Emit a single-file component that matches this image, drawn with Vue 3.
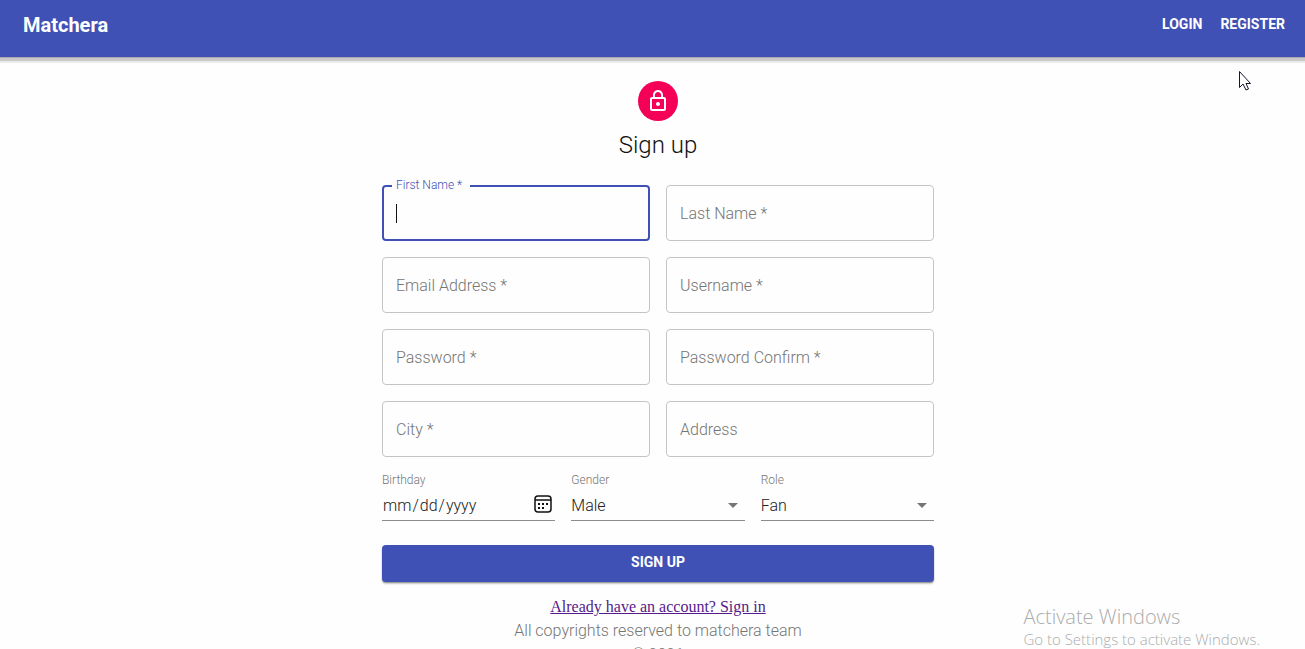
<script setup>
import { reactive } from 'vue'

const fields = [
  { id: 'firstName', label: 'First Name *', type: 'text', active: true },
  { id: 'lastName', label: 'Last Name *', type: 'text' },
  { id: 'email', label: 'Email Address *', type: 'email' },
  { id: 'username', label: 'Username *', type: 'text' },
  { id: 'password', label: 'Password *', type: 'password' },
  { id: 'passwordConfirm', label: 'Password Confirm *', type: 'password' },
  { id: 'city', label: 'City *', type: 'text' },
  { id: 'address', label: 'Address', type: 'text' }
]

const selects = [
  { id: 'gender', label: 'Gender', options: ['Male', 'Female'] },
  { id: 'role', label: 'Role', options: ['Fan', 'Manager'] }
]

const form = reactive({
  firstName: '',
  lastName: '',
  email: '',
  username: '',
  password: '',
  passwordConfirm: '',
  city: '',
  address: '',
  birthday: '',
  gender: 'Male',
  role: 'Fan'
})
</script>

<template>
  <div class="page">
    <header class="bar">
      <h1 class="brand">Matchera</h1>
      <nav class="nav">
        <a href="#login">LOGIN</a>
        <a href="#register">REGISTER</a>
      </nav>
    </header>

    <main class="main">
      <div class="container">
        <div class="avatar">
          <svg viewBox="0 0 24 24" width="24" height="24" fill="#fff" aria-hidden="true">
            <path d="M12 17c1.1 0 2-.9 2-2s-.9-2-2-2-2 .9-2 2 .9 2 2 2zm6-9h-1V6c0-2.760-2.240-5-5-5S7 3.240 7 6v2H6c-1.100 0-2 .9-2 2v10c0 1.100.9 2 2 2h12c1.100 0 2-.9 2-2V10c0-1.100-.9-2-2-2zM8.900 6c0-1.710 1.390-3.100 3.100-3.100s3.100 1.390 3.100 3.100v2H8.900V6zM18 20H6V10h12v10z" />
          </svg>
        </div>
        <h2 class="title">Sign up</h2>

        <form class="form" @submit.prevent>
          <div class="grid">
            <div v-for="f in fields" :key="f.id" class="field" :class="{ active: f.active }">
              <input :id="f.id" v-model="form[f.id]" :type="f.type" />
              <label :for="f.id">{{ f.label }}</label>
              <span v-if="f.active" class="caret"></span>
            </div>
          </div>

          <div class="row">
            <div class="line-field">
              <label for="birthday">Birthday</label>
              <input id="birthday" v-model="form.birthday" type="date" />
              <svg class="calendar" viewBox="0 0 18 18" width="18" height="18" aria-hidden="true">
                <rect x="1" y="1" width="16" height="16" rx="3" fill="none" stroke="#111" stroke-width="1.500" />
                <path d="M1 5h16" stroke="#111" stroke-width="1.500" />
                <path d="M8 8h2v2H8zM12 8h2v2h-2zM4 8h2v2H4zM4 12h2v2H4zM8 12h2v2H8z" fill="#111" />
              </svg>
            </div>
            <div v-for="s in selects" :key="s.id" class="line-field">
              <label :for="s.id">{{ s.label }}</label>
              <select :id="s.id" v-model="form[s.id]">
                <option v-for="o in s.options" :key="o">{{ o }}</option>
              </select>
              <svg class="arrow" viewBox="0 0 24 24" width="24" height="24" aria-hidden="true">
                <path d="M7 10l5 5 5-5z" fill="#757575" />
              </svg>
            </div>
          </div>

          <button class="submit" type="submit">SIGN UP</button>
        </form>

        <footer class="footer">
          <a href="#login">Already have an account? Sign in</a>
          <p>All copyrights reserved to matchera team</p>
          <p>© 2021</p>
        </footer>
      </div>
    </main>

    <svg class="pointer" viewBox="0 0 12 20" width="12" height="20" aria-hidden="true">
      <path d="M.5.500v16l3.500-3.500 3 6 2.500-1-2.500-5.500h4.500z" fill="#fff" stroke="#16162a" />
    </svg>

    <aside class="watermark">
      <strong>Activate Windows</strong>
      <span>Go to Settings to activate Windows.</span>
    </aside>
  </div>
</template>

<style>
body {
  margin: 0;
  background: #fefefe;
}
</style>

<style scoped>
.page {
  position: relative;
  height: 100vh;
  overflow: hidden;
  font-family: Roboto, "Liberation Sans", sans-serif;
  font-weight: 300;
}

.bar {
  display: flex;
  justify-content: space-between;
  align-items: center;
  box-sizing: border-box;
  height: 57px;
  padding: 0 20px 8px 23px;
  background: #3f51b5;
  color: #fff;
  box-shadow: 0 1px 0 #aaa8ac, 0 4px 0 #cac8ca, 0 6px 0 #ebebeb;
}

.brand {
  margin: 0;
  font-size: 20px;
  line-height: 32px;
  font-weight: 700;
}

.nav {
  display: flex;
  gap: 18px;
  padding-bottom: 2px;
}

.nav a {
  color: inherit;
  font-size: 14px;
  line-height: 24px;
  font-weight: 700;
  text-decoration: none;
}

.main {
  padding: 24px 0 0 11px;
}

.container {
  display: flex;
  flex-direction: column;
  align-items: center;
  max-width: 552px;
  margin: 0 auto;
}

.avatar {
  display: flex;
  align-items: center;
  justify-content: center;
  width: 40px;
  height: 40px;
  margin-bottom: 8px;
  border-radius: 50%;
  background: #f50057;
}

.title {
  margin: 0;
  font-size: 24px;
  line-height: 32px;
  font-weight: 300;
  color: #111;
}

.form {
  width: 100%;
  margin-top: 24px;
}

.grid {
  display: grid;
  grid-template-columns: 1fr 1fr;
  gap: 16px;
}

.field {
  position: relative;
  height: 56px;
}

.field input {
  box-sizing: border-box;
  width: 100%;
  height: 100%;
  padding: 0 14px;
  border: 1px solid #c4c4c4;
  border-radius: 4px;
  outline: 0;
  background: transparent;
  font: inherit;
  font-size: 16px;
}

.field label {
  position: absolute;
  left: 14px;
  top: 17px;
  font-size: 16px;
  line-height: 24px;
  color: #757575;
}

.field.active input {
  border: 2px solid #3f51b5;
  caret-color: transparent;
}

.field.active label {
  left: 10px;
  top: -8px;
  padding: 0 8px 0 4px;
  background: #fefefe;
  font-size: 12px;
  line-height: 16px;
  color: #3f51b5;
}

.caret {
  position: absolute;
  left: 14px;
  top: 19px;
  width: 1px;
  height: 19px;
  background: #111;
}

.row {
  display: grid;
  grid-template-columns: repeat(3, 1fr);
  gap: 16px;
  margin-top: 16px;
}

.line-field {
  position: relative;
  display: flex;
  flex-direction: column;
}

.line-field label {
  font-size: 12px;
  line-height: 14px;
  color: #757575;
}

.line-field input,
.line-field select {
  box-sizing: border-box;
  width: 100%;
  height: 34px;
  padding: 4px 0 0;
  border: 0;
  border-bottom: 1px solid #8c8c8c;
  border-radius: 0;
  outline: 0;
  appearance: none;
  background: transparent;
  font: inherit;
  font-size: 16px;
  color: #212121;
}

.line-field input::-webkit-calendar-picker-indicator {
  opacity: 0;
}

.calendar,
.arrow {
  position: absolute;
  pointer-events: none;
}

.calendar {
  right: 3px;
  top: 22px;
}

.arrow {
  right: 0;
  top: 20px;
}

.submit {
  width: 100%;
  height: 37px;
  margin: 24px 0 16px;
  padding: 0 0 4px;
  border: 0;
  border-radius: 4px;
  background: #3f51b5;
  box-shadow: 0 1px 1px #999, 0 2px 2px #ccc;
  color: #fff;
  font: inherit;
  font-size: 14px;
  font-weight: 700;
}

.footer {
  display: flex;
  flex-direction: column;
  align-items: center;
  font-size: 16px;
  line-height: 24px;
  color: #757575;
}

.footer a {
  margin-bottom: 3px;
  font-family: "Liberation Serif", serif;
  font-weight: 400;
  line-height: 18px;
  color: #551a8b;
}

.footer p {
  margin: 0;
}

.pointer {
  position: absolute;
  right: 54px;
  top: 71px;
}

.watermark {
  position: absolute;
  right: 45px;
  bottom: 0;
  display: flex;
  flex-direction: column;
  font-family: "Open Sans", "Noto Sans", sans-serif;
  font-size: 15px;
  line-height: 20px;
  font-weight: 300;
  color: #acacac;
}

.watermark strong {
  font-size: 20px;
  line-height: 24px;
  font-weight: 300;
}
</style>
